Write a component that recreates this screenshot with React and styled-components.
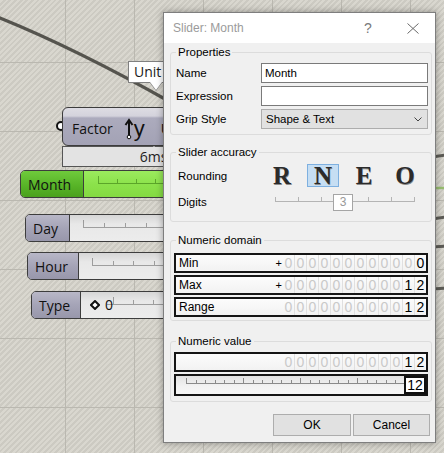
import React from 'react';
import styled, { createGlobalStyle } from 'styled-components';

const GlobalStyle = createGlobalStyle`
  html, body {
    margin: 0;
    padding: 0;
  }
  body {
    width: 444px;
    height: 453px;
    overflow: hidden;
    font-family: "Liberation Sans", Arial, sans-serif;
  }
`;

const Canvas = styled.div`
  position: relative;
  width: 444px;
  height: 453px;
  overflow: hidden;
  background-color: #d4d2ca;
  background-image:
    linear-gradient(to bottom, #bab8b0 1px, transparent 1px),
    linear-gradient(to right, #bab8b0 1px, transparent 1px),
    repeating-linear-gradient(-45deg, #d9d7cf 0 2px, #cccac2 2px 4px);
  background-size: 69px 69px, 69px 69px, auto;
  background-position: 0 62px, 65px 0, 0 0;
`;

const WireLayer = styled.svg`
  position: absolute;
  left: 0;
  top: 0;
  width: 444px;
  height: 453px;
`;

/* ---------- grasshopper canvas objects ---------- */

const Tooltip = styled.div`
  position: absolute;
  left: 128px;
  top: 61px;
  width: 60px;
  height: 22px;
  box-sizing: border-box;
  padding-left: 5px;
  background: #fff;
  border: 1px solid #808080;
  font: 14px/20px "Open Sans", sans-serif;
  color: #1a1a1a;

  &::before,
  &::after {
    content: '';
    position: absolute;
    left: 21px;
    border: 6px solid transparent;
  }
  &::before {
    top: 21px;
    border-top: 8px solid #808080;
  }
  &::after {
    top: 20px;
    border-top: 8px solid #fff;
  }
`;

const Port = styled.div`
  position: absolute;
  left: 56px;
  top: 121px;
  width: 6px;
  height: 6px;
  border: 2px solid #111;
  border-radius: 50%;
  background: #fff;
`;

const Component = styled.div`
  position: absolute;
  left: 62px;
  top: 107px;
  width: 150px;
  height: 39px;
  box-sizing: border-box;
  border: 1px solid #3c3c3c;
  border-radius: 6px;
  background: linear-gradient(#dddce3 0, #d4d3dc 8px, #acabbd 10px, #a3a2b5 100%);
  display: flex;
  align-items: center;
  padding: 4px 0 0 9px;
  font: 14px "Open Sans", sans-serif;
  color: #111;
`;

const ComponentIcon = styled.span`
  display: flex;
  align-items: center;
  margin-left: 11px;
  font: 22px/1 "Liberation Sans", sans-serif;
  color: #111;
`;

const OutputLabel = styled.span`
  margin-left: 16px;
`;

const Panel = styled.div`
  position: absolute;
  left: 62px;
  top: 146px;
  width: 183px;
  height: 21px;
  box-sizing: border-box;
  background: #e3e3e3;
  border: 1px solid #555;
  text-align: center;
  font: 14px/19px "Open Sans", sans-serif;
  color: #222;

  &::before {
    content: '';
    position: absolute;
    left: 87px;
    top: -5px;
    border: 4px solid transparent;
    border-bottom: 4px solid #e3e3e3;
  }
`;

const SliderBox = styled.div`
  position: absolute;
  left: ${p => p.$x}px;
  top: ${p => p.$y}px;
  width: 190px;
  height: 28px;
  box-sizing: border-box;
  display: flex;
  border: 1px solid #3d3d3d;
  border-radius: 5px;
  overflow: hidden;
  font: 14px "Open Sans", sans-serif;
  color: #111;
`;

const SliderName = styled.div`
  flex: 0 0 ${p => p.$w}px;
  box-sizing: border-box;
  display: flex;
  align-items: center;
  padding-left: 7px;
  border-right: 1px solid #3d3d3d;
  background: ${p =>
    p.$active
      ? 'linear-gradient(#6fcb3c, #56b226 60%, #4ba11d)'
      : 'linear-gradient(#b8b7c7, #a5a4b7 50%, #9897ab)'};
`;

const SliderTrack = styled.div`
  flex: 1;
  position: relative;
  display: flex;
  align-items: center;
  gap: 5px;
  padding-left: 9px;
  background: ${p =>
    p.$active
      ? 'linear-gradient(#9beb5e, #8ce24b 50%, #84da42)'
      : 'linear-gradient(#d6d6d6, #e8e8e8 35%, #ececec)'};
`;

const TrackValue = styled.span`
  position: relative;
  line-height: 1;
`;

const TickSvg = styled.svg`
  position: absolute;
  left: 0;
  top: 0;
  width: 100%;
  height: 100%;
`;

function Scale({ start, step, count, base, color, from }) {
  const ticks = [];
  for (let i = 0; i < count; i++) {
    const x = start + i * step + 0.5;
    ticks.push(<line key={i} x1={x} x2={x} y1={base - (i === 0 ? 7 : 4)} y2={base} />);
  }
  return (
    <TickSvg>
      <g stroke={color} strokeWidth="1" shapeRendering="crispEdges">
        <line x1={from ?? start} x2={start + step * count} y1={base + 0.5} y2={base + 0.5} />
        {ticks}
      </g>
    </TickSvg>
  );
}

function NumberSlider({ x, y, name, w, active, children, ticks }) {
  return (
    <SliderBox $x={x} $y={y}>
      <SliderName $w={w} $active={active}>{name}</SliderName>
      <SliderTrack $active={active}>
        <Scale
          {...ticks}
          base={12}
          color={active ? 'rgba(30,90,0,0.45)' : 'rgba(0,0,0,0.32)'}
        />
        {children}
      </SliderTrack>
    </SliderBox>
  );
}

/* ---------- dialog ---------- */

const Dialog = styled.div`
  position: absolute;
  left: 163px;
  top: 12px;
  width: 273px;
  height: 431px;
  box-sizing: border-box;
  display: flex;
  flex-direction: column;
  border: 1px solid #7e7e7e;
  background: #f0f0f0;
  box-shadow: 0 0 7px rgba(0, 0, 0, 0.35);
  font: 11.5px "Liberation Sans", Arial, sans-serif;
  color: #000;
`;

const TitleBar = styled.div`
  height: 30px;
  flex: 0 0 30px;
  display: flex;
  align-items: center;
  padding-left: 9px;
  background: #fff;
`;

const Title = styled.span`
  flex: 1;
  font-size: 12px;
  color: #9b9b9b;
`;

const HelpButton = styled.span`
  width: 14px;
  margin-right: 32px;
  font-size: 14px;
  color: #7a7a7a;
  text-align: center;
`;

const CloseButton = styled.span`
  display: flex;
  width: 14px;
  margin-right: 14px;
`;

const Body = styled.div`
  flex: 1;
  display: flex;
  flex-direction: column;
  padding: 2px 3px 5px 6px;
`;

const Group = styled.fieldset`
  margin: ${p => p.$mt || 0}px 0 0;
  min-inline-size: 0;
  padding: 0 3px ${p => p.$pb}px 3px;
  border: 1px solid #dcdcdc;
  border-radius: 3px;
`;

const Legend = styled.legend`
  margin-left: 2px;
  padding: 0 2px;
  font-size: 11.5px;
  line-height: 14px;
`;

const FieldGrid = styled.div`
  display: grid;
  grid-template-columns: 85px 1fr;
  grid-auto-rows: 20px;
  row-gap: 3px;
  align-items: center;
  margin-top: 4px;
  padding-left: 2px;
`;

const FieldLabel = styled.span`
  white-space: nowrap;
`;

const TextBox = styled.div`
  height: 20px;
  box-sizing: border-box;
  border: 1px solid #7a7a7a;
  background: #fff;
  padding-left: 3px;
  line-height: 18px;
`;

const Select = styled.div`
  height: 20px;
  box-sizing: border-box;
  display: flex;
  align-items: center;
  justify-content: space-between;
  padding: 0 5px 0 4px;
  border: 1px solid #adadad;
  background: #e1e1e1;
`;

const AccuracyRow = styled.div`
  display: grid;
  grid-template-columns: 88px auto;
  align-items: center;
  height: ${p => p.$h}px;
  margin-top: ${p => p.$mt}px;
  padding-left: 4px;
`;

const Glyphs = styled.div`
  display: flex;
  gap: 9px;
`;

const Glyph = styled.div`
  width: 32px;
  height: 23px;
  box-sizing: border-box;
  border: 1px solid ${p => (p.$selected ? '#7eb0e0' : 'transparent')};
  background: ${p => (p.$selected ? '#c6def3' : 'transparent')};
  text-align: center;
  font: bold 25px/22px "Liberation Serif", "Times New Roman", serif;
  color: #2b2b2b;
  text-shadow: 0.6px 0.6px 0 #8a8a8a;
`;

const DigitsSlider = styled.div`
  position: relative;
  width: 141px;
  height: 18px;
  margin-left: 9px;
`;

const DigitsThumb = styled.div`
  position: absolute;
  left: 58px;
  top: 1px;
  width: 20px;
  height: 17px;
  box-sizing: border-box;
  border: 1px solid #a5a5a5;
  background: #fff;
  text-align: center;
  line-height: 15px;
  font-size: 12px;
  color: #999;
`;

const Rows = styled.div`
  display: flex;
  flex-direction: column;
  gap: 2px;
  margin-top: ${p => p.$mt}px;
`;

const DigitRow = styled.div`
  position: relative;
  height: ${p => p.$h || 20}px;
  box-sizing: border-box;
  display: flex;
  align-items: stretch;
  border: 2px solid #151515;
  background: ${p =>
    p.$sunken ? 'linear-gradient(#e2e2e2, #f3f3f3 60%, #f6f6f6)' : 'linear-gradient(#fcfcfc, #f2f2f2)'};
`;

const RowLabel = styled.span`
  flex: 1;
  padding-left: 3px;
  line-height: 16px;
  font-size: 12px;
`;

const Sign = styled.span`
  width: 8px;
  text-align: right;
  line-height: 16px;
  font-size: 11px;
`;

const Digit = styled.span`
  width: 12px;
  box-sizing: border-box;
  border-left: 1px solid ${p => (p.$first ? 'transparent' : '#e0e0e0')};
  text-align: center;
  line-height: 16px;
  font-size: 14px;
  color: ${p => (p.$on ? '#000' : '#c9c9c9')};
`;

const ValueThumb = styled.div`
  position: absolute;
  right: 0;
  top: 0;
  width: 22px;
  height: 18px;
  box-sizing: border-box;
  border: 2px solid #111;
  background: #fff;
  text-align: center;
  line-height: 14px;
  font-size: 14px;
`;

const ButtonRow = styled.div`
  display: flex;
  justify-content: flex-end;
  gap: 2px;
  margin-top: 12px;
  padding-right: 2px;
`;

const Button = styled.div`
  width: ${p => p.$w}px;
  height: 22px;
  box-sizing: border-box;
  border: 1px solid #adadad;
  background: #e1e1e1;
  text-align: center;
  line-height: 20px;
  font-size: 12px;
`;

function DigitCells({ value, sign, label }) {
  const chars = value.padStart(12, '0').split('');
  const firstSig = 12 - value.length;
  return (
    <DigitRow>
      <RowLabel>{label}</RowLabel>
      <Sign>{sign}</Sign>
      {chars.map((c, i) => (
        <Digit key={i} $first={i === 0} $on={i >= firstSig}>
          {c}
        </Digit>
      ))}
    </DigitRow>
  );
}

function ValueSlider() {
  const ticks = [];
  for (let i = 0; i < 24; i++) {
    const x = Math.round(10 + i * 9.52) + 0.5;
    ticks.push(<line key={i} x1={x} x2={x} y1={i % 6 === 0 ? 2 : 4} y2={7} />);
  }
  return (
    <DigitRow $h={22} $sunken>
      <TickSvg>
        <g stroke="#8a8a8a" strokeWidth="1" shapeRendering="crispEdges">
          <line x1="10" x2="229" y1="7.5" y2="7.5" />
          {ticks}
        </g>
      </TickSvg>
      <ValueThumb>12</ValueThumb>
    </DigitRow>
  );
}

export default function App() {
  const digitTicks = [0, 23, 46, 69, 93, 116, 139];
  return (
    <>
      <GlobalStyle />
      <Canvas>
        <WireLayer viewBox="0 0 444 453">
          <path d="M -5 16 Q 75 48 172 103" stroke="#55544e" strokeWidth="3.2" fill="none" />
          <g strokeWidth="3" fill="none">
            <path d="M 432 157 L 446 155" stroke="#5c5b55" />
            <path d="M 432 188 L 446 188" stroke="#98bd70" strokeWidth="2.5" />
            <path d="M 432 219 L 446 217" stroke="#5c5b55" />
            <path d="M 432 247 L 446 246" stroke="#5c5b55" />
            <path d="M 432 289 L 446 288" stroke="#5c5b55" />
          </g>
        </WireLayer>

        <Tooltip>Unit</Tooltip>

        <Port />
        <Component>
          Factor
          <ComponentIcon>
            <svg width="10" height="22" viewBox="0 0 10 22">
              <path d="M5 19 V3 M1.5 7 L5 2 L8.5 7" stroke="#111" strokeWidth="2" fill="none" />
              <circle cx="5" cy="19" r="1.8" fill="#fff" stroke="#111" strokeWidth="1" />
            </svg>
            <span>y</span>
          </ComponentIcon>
          <OutputLabel>U</OutputLabel>
        </Component>
        <Panel>6ms</Panel>

        <NumberSlider x={20} y={170} w={63} name="Month" active ticks={{ start: 14, step: 19, count: 6 }} />
        <NumberSlider x={25} y={214} w={44} name="Day" ticks={{ start: 13, step: 21, count: 6 }} />
        <NumberSlider x={27} y={252} w={51} name="Hour" ticks={{ start: 13, step: 20.5, count: 6 }} />
        <NumberSlider x={31} y={291} w={49} name="Type" ticks={{ start: 32, step: 20, count: 5, from: 26 }}>
          <svg width="10" height="10" viewBox="0 0 10 10" style={{ position: 'relative' }}>
            <polygon points="5,1 9,5 5,9 1,5" fill="#fff" stroke="#111" strokeWidth="2" />
          </svg>
          <TrackValue>0</TrackValue>
        </NumberSlider>

        <Dialog>
          <TitleBar>
            <Title>Slider: Month</Title>
            <HelpButton>?</HelpButton>
            <CloseButton>
              <svg width="12" height="11" viewBox="0 0 12 11">
                <path d="M0.5 0.5 L11.5 10.5 M11.5 0.5 L0.5 10.5" stroke="#6a6a6a" strokeWidth="1" />
              </svg>
            </CloseButton>
          </TitleBar>

          <Body>
            <Group $pb={5}>
              <Legend>Properties</Legend>
              <FieldGrid>
                <FieldLabel>Name</FieldLabel>
                <TextBox>Month</TextBox>
                <FieldLabel>Expression</FieldLabel>
                <TextBox />
                <FieldLabel>Grip Style</FieldLabel>
                <Select>
                  <span>Shape &amp; Text</span>
                  <svg width="8" height="5" viewBox="0 0 8 5">
                    <path d="M0.5 0.5 L4 4 L7.5 0.5" stroke="#444" strokeWidth="1" fill="none" />
                  </svg>
                </Select>
              </FieldGrid>
            </Group>

            <Group $mt={10} $pb={10}>
              <Legend>Slider accuracy</Legend>
              <AccuracyRow $h={23} $mt={5}>
                <FieldLabel>Rounding</FieldLabel>
                <Glyphs>
                  {['R', 'N', 'E', 'O'].map(l => (
                    <Glyph key={l} $selected={l === 'N'}>
                      {l}
                    </Glyph>
                  ))}
                </Glyphs>
              </AccuracyRow>
              <AccuracyRow $h={18} $mt={6}>
                <FieldLabel>Digits</FieldLabel>
                <DigitsSlider>
                  <TickSvg>
                    <g stroke="#b4b4b4" strokeWidth="1" shapeRendering="crispEdges">
                      <line x1="0" x2="140" y1="8.5" y2="8.5" />
                      {digitTicks.map(x => (
                        <line key={x} x1={x + 0.5} x2={x + 0.5} y1="4" y2="8" />
                      ))}
                    </g>
                  </TickSvg>
                  <DigitsThumb>3</DigitsThumb>
                </DigitsSlider>
              </AccuracyRow>
            </Group>

            <Group $mt={11} $pb={3}>
              <Legend>Numeric domain</Legend>
              <Rows $mt={6}>
                <DigitCells label="Min" sign="+" value="0" />
                <DigitCells label="Max" sign="+" value="12" />
                <DigitCells label="Range" value="12" />
              </Rows>
            </Group>

            <Group $mt={13} $pb={5}>
              <Legend>Numeric value</Legend>
              <Rows $mt={4}>
                <DigitCells value="12" />
                <ValueSlider />
              </Rows>
            </Group>

            <ButtonRow>
              <Button $w={78}>OK</Button>
              <Button $w={77}>Cancel</Button>
            </ButtonRow>
          </Body>
        </Dialog>
      </Canvas>
    </>
  );
}
